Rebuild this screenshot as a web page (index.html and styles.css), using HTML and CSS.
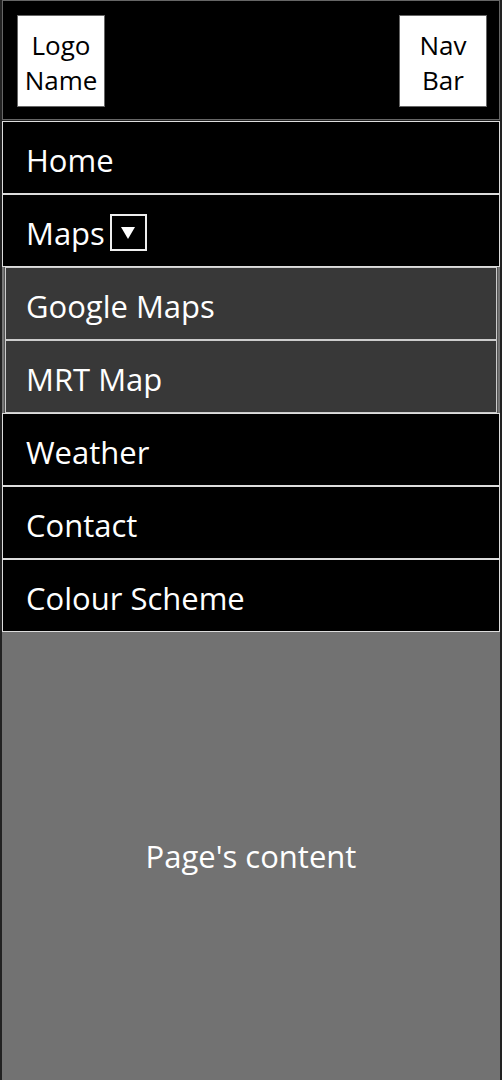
FILE: index.html
```html
<!DOCTYPE html>
<html lang="en">
<head>
<meta charset="utf-8">
<title>Nav</title>
<link rel="stylesheet" href="styles.css">
</head>
<body>
<div class="page">
  <header class="header">
    <div class="box">Logo<br>Name</div>
    <div class="box">Nav<br>Bar</div>
  </header>
  <nav class="menu">
    <div class="item">Home</div>
    <div class="item">Maps<span class="toggle"><svg width="16" height="14" viewBox="0 0 16 14"><polygon points="1,1 15,1 8,13" fill="#fff"/></svg></span></div>
    <div class="sub">
      <div class="item subitem">Google Maps</div>
      <div class="item subitem">MRT Map</div>
    </div>
    <div class="item">Weather</div>
    <div class="item">Contact</div>
    <div class="item">Colour Scheme</div>
  </nav>
  <main class="content">Page's content</main>
</div>
</body>
</html>
```

FILE: styles.css
```css
html, body {
  margin: 0;
  padding: 0;
  height: 100%;
}
body {
  background: #222;
  font-family: "Open Sans", "Noto Sans", sans-serif;
}
.page {
  display: flex;
  flex-direction: column;
  min-height: 100%;
  padding: 0 2px;
}
.header {
  height: 120px;
  background: #000;
  border: 1px solid #666;
  display: flex;
  justify-content: space-between;
  align-items: flex-start;
  padding: 14px 12px 0 14px;
  box-sizing: border-box;
}
.box {
  width: 88px;
  height: 92px;
  box-sizing: border-box;
  background: #fff;
  border: 1px solid #666;
  color: #000;
  font-size: 26px;
  line-height: 35px;
  padding-top: 3px;
  display: flex;
  align-items: center;
  justify-content: center;
  text-align: center;
}
.menu {
  display: flex;
  flex-direction: column;
  margin-top: 1px;
}
.item {
  height: 73px;
  box-sizing: border-box;
  border: 1px solid #ddd;
  background: #000;
  color: #fff;
  font-size: 31px;
  display: flex;
  align-items: center;
  padding: 4px 0 0 23px;
}
.toggle {
  flex: none;
  width: 37px;
  height: 37px;
  box-sizing: border-box;
  border: 2px solid #eee;
  margin-left: 5px;
  display: inline-flex;
  align-items: center;
  justify-content: center;
}
.sub {
  border-left: 2px solid #777;
  border-right: 2px solid #777;
  background: #555;
  padding: 0 1px;
}
.subitem {
  background: #383838;
  border-color: #ccc;
  padding-left: 20px;
}
.content {
  flex: 1;
  background: #727272;
  color: #fff;
  font-size: 31px;
  display: flex;
  align-items: center;
  justify-content: center;
}
```
